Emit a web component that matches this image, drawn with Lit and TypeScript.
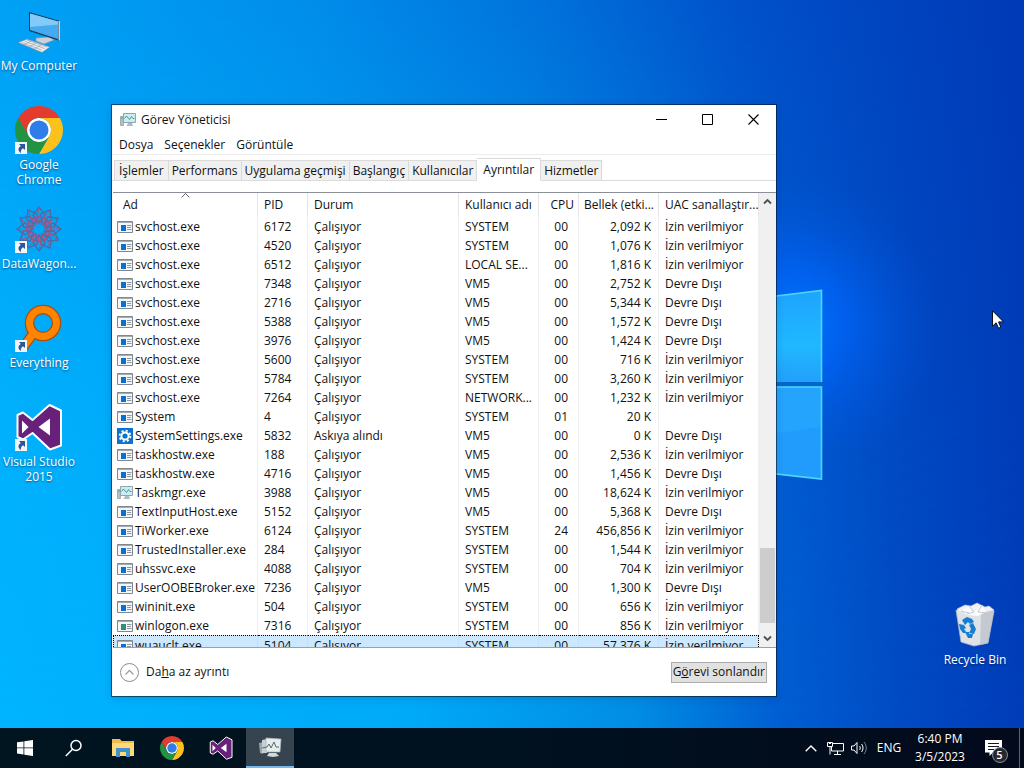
import { LitElement, html, css, svg, TemplateResult } from "lit";
import { customElement, state } from "lit/decorators.js";
import { classMap } from "lit/directives/class-map.js";

type IconKind = "exe" | "gear" | "taskmgr" | "logon";
type Row = [string, string, string, string, string, string, string, IconKind?];

const RUN = "Çalışıyor";
const DENY = "İzin verilmiyor";
const OFF = "Devre Dışı";

const ROWS: Row[] = [
  ["svchost.exe", "6172", RUN, "SYSTEM", "00", "2,092 K", DENY],
  ["svchost.exe", "4520", RUN, "SYSTEM", "00", "1,076 K", DENY],
  ["svchost.exe", "6512", RUN, "LOCAL SE...", "00", "1,816 K", DENY],
  ["svchost.exe", "7348", RUN, "VM5", "00", "2,752 K", OFF],
  ["svchost.exe", "2716", RUN, "VM5", "00", "5,344 K", OFF],
  ["svchost.exe", "5388", RUN, "VM5", "00", "1,572 K", OFF],
  ["svchost.exe", "3976", RUN, "VM5", "00", "1,424 K", OFF],
  ["svchost.exe", "5600", RUN, "SYSTEM", "00", "716 K", DENY],
  ["svchost.exe", "5784", RUN, "SYSTEM", "00", "3,260 K", DENY],
  ["svchost.exe", "7264", RUN, "NETWORK...", "00", "1,232 K", DENY],
  ["System", "4", RUN, "SYSTEM", "01", "20 K", ""],
  ["SystemSettings.exe", "5832", "Askıya alındı", "VM5", "00", "0 K", OFF, "gear"],
  ["taskhostw.exe", "188", RUN, "VM5", "00", "2,536 K", DENY],
  ["taskhostw.exe", "4716", RUN, "VM5", "00", "1,456 K", OFF],
  ["Taskmgr.exe", "3988", RUN, "VM5", "00", "18,624 K", DENY, "taskmgr"],
  ["TextInputHost.exe", "5152", RUN, "VM5", "00", "5,368 K", OFF],
  ["TiWorker.exe", "6124", RUN, "SYSTEM", "24", "456,856 K", DENY],
  ["TrustedInstaller.exe", "284", RUN, "SYSTEM", "00", "1,544 K", DENY],
  ["uhssvc.exe", "4088", RUN, "SYSTEM", "00", "704 K", DENY],
  ["UserOOBEBroker.exe", "7236", RUN, "VM5", "00", "1,300 K", OFF],
  ["wininit.exe", "504", RUN, "SYSTEM", "00", "656 K", DENY],
  ["winlogon.exe", "7316", RUN, "SYSTEM", "00", "856 K", DENY, "logon"],
  ["wuauclt.exe", "5104", RUN, "SYSTEM", "00", "57,376 K", DENY],
];

const COLUMNS: { label: string; width: number; align?: string }[] = [
  { label: "Ad", width: 145 },
  { label: "PID", width: 50 },
  { label: "Durum", width: 151 },
  { label: "Kullanıcı adı", width: 80 },
  { label: "CPU", width: 40, align: "num cpu" },
  { label: "Bellek (etki...", width: 80, align: "num" },
  { label: "UAC sanallaştır...", width: 100 },
];

const TABS = ["İşlemler", "Performans", "Uygulama geçmişi", "Başlangıç", "Kullanıcılar", "Ayrıntılar", "Hizmetler"];

const chromeIcon = (size: number) => html`<svg width=${size} height=${size} viewBox="0 0 48 48" aria-hidden="true">
  <circle cx="24" cy="24" r="12" fill="#fff" />
  <path fill="#e33b2e" d="M24 12h20.78a24 24 0 0 0-41.56 0L13.6 30A12 12 0 0 1 24 12z" />
  <path fill="#fcc21b" d="M34.39 30 24 48a24 24 0 0 0 20.78-36H24a12 12 0 0 1 10.39 18z" />
  <path fill="#229342" d="M13.61 30 3.22 12A24 24 0 0 0 24 48l10.39-18a12 12 0 0 1-20.78 0z" />
  <circle cx="24" cy="24" r="9.5" fill="#2f7de9" />
</svg>`;

const vsIcon = (size: number) => html`<svg width=${size} height=${size} viewBox="0 0 48 48" aria-hidden="true">
  <path fill="#68217a" stroke="#fff" stroke-width="2" stroke-linejoin="round" fill-rule="evenodd"
    d="M2.5 12 8 9.5 17.5 17 34.5 2 46 7.5v35L35 46.500 17.500 30 8 36.500 2.500 34z" />
  <path fill="#fff" d="M7 17.500 13.500 24 7 30.500zM23.500 24 35 15.500v17z" />
</svg>`;

const everythingIcon = html`<svg width="48" height="48" viewBox="0 0 48 48" aria-hidden="true">
  <path d="M17 31 7 45" stroke="#a84d10" stroke-width="10" />
  <circle cx="28" cy="19" r="13.500" fill="none" stroke="#a84d10" stroke-width="9.500" />
  <path d="M18.500 29 7 45" stroke="#ff8400" stroke-width="7.500" />
  <circle cx="28" cy="19" r="13.500" fill="none" stroke="#ff8400" stroke-width="7" />
</svg>`;

const dataWagonIcon = html`<svg width="48" height="48" viewBox="0 0 48 48" fill="none" aria-hidden="true">
  ${Array.from({ length: 12 }, (_, i) => svg`<g transform="rotate(${i * 30} 24 24)">
    <path d="M24 18 18 10 24 2 30 10z" stroke="#55669f" stroke-width="1.300" />
    <path d="M24 19 29 12 34 6" stroke="#8d5f92" stroke-width="1.100" />
    <circle cx="24" cy="12" r="1.700" fill="#a85280" />
    <circle cx="20" cy="16" r="1.300" fill="#b4527a" />
  </g>`)}
</svg>`;

const computerIcon = html`<svg width="48" height="48" viewBox="0 0 48 48" aria-hidden="true">
  <path d="M21 31l13-1 5 3-10 4-8-3z" fill="#c9d2da" stroke="#8796a5" stroke-width=".6" />
  <path d="M14 5l31 9v20l-31-10z" fill="#1b3d5f" />
  <path d="M43.500 14l1.500 0v20l-1.500-1z" fill="#c6d3dd" />
  <path d="M15 6.500l28 8v17.500l-28-9z" fill="#46aaf0" />
  <path d="M15 6.500l28 8v3L15 20z" fill="#82caf8" />
  <path d="M3 35.500l9-3.500 23 8-8 5.500z" fill="#e8edf1" stroke="#76889a" stroke-width=".7" />
  <path d="M6.500 35.500l20 7.500M9.500 34.200l20 7.300M12 33l20 7M9 38l7-4M14 40l7-4M19 42l7-4" stroke="#98a5b0" stroke-width=".7" />
</svg>`;

const binIcon = html`<svg width="48" height="48" viewBox="0 0 48 48" aria-hidden="true">
  <path d="M6 8l8-4 6 1 6-3 8 4 4-1 5 4-5 8H10z" fill="#eff1f4" stroke="#c7ccd4" stroke-width=".6" />
  <path d="M5 9l5 32 13 4 14-3 6-32-7 2-10 1-11-1z" fill="#dfe2e7" />
  <path d="M30 12l13-3-6 33-8 2z" fill="#c5cad2" />
  <path d="M10 10l8-5 5 6 8-7 4 7-8 4-11-1z" fill="#fbfbfc" />
  <path d="M18 5l5 6-7 2M31 4l-4 7 8 1M10 10l8 2" stroke="#b7bcc4" stroke-width=".8" fill="none" />
  <path d="M5 9l5 32 13 4 14-3 6-32" fill="none" stroke="#afb7c3" stroke-width=".8" />
  <g fill="#167dd2">
    <path d="M11 19l5-3 5 2 2 3-4 2-2-2-3 3z" />
    <path d="M22 22l3 6-2 5-5-1 2-4-2-4z" />
    <path d="M8 23l5 1 2 3-2 1 3 4-4 0-3-4z" />
    <path d="M14 31l4 0 0 2 4 0-1 4-4 0z" />
  </g>
</svg>`;

const monitorIcon = (size: number) => html`<svg width=${size} height=${size} viewBox="0 0 16 16" aria-hidden="true">
  <path d="M.5 4.500h3v9h-3z" fill="#b5c0be" stroke="#909a98" stroke-width=".7" />
  <path d="M1.200 6h1.600" stroke="#39a868" />
  <path d="M3.500 1.500h12v9h-12z" fill="#cdecf1" stroke="#93a5ac" />
  <path d="M4.500 6.500l2-2.500 3 3.500 2-3 1.500 2h1.500" fill="none" stroke="#3b8f9a" stroke-width=".9" />
  <path d="M8 11h4l1 3H6.500z" fill="#b1bac0" />
</svg>`;

const taskbarMonitor = html`<svg width="24" height="24" viewBox="0 0 24 24" aria-hidden="true">
  <path d="M1 8l4-1v12l-3-1z" fill="#98a5a9" /><path d="M4 5l5-1v14l-5 0z" fill="#c7cfd1" />
  <path d="M8 3l15 1-1 13-14 0z" fill="#e7eced" stroke="#aab5b9" stroke-width=".7" />
  <path d="M4 13l5-1 2-3 2 4 3-6 2 5h3" fill="none" stroke="#516a72" stroke-width="1" />
  <path d="M11 18h7l3 3-6 1-6-1z" fill="#d4dadb" />
</svg>`;

const rowIcon = (kind: IconKind = "exe"): TemplateResult => {
  if (kind === "taskmgr") return monitorIcon(16);
  if (kind === "gear")
    return html`<svg width="16" height="16" viewBox="0 0 16 16" aria-hidden="true">
      <path d="M0 0h16v16H0z" fill="#0d72cc" />
      <circle cx="8" cy="8" r="3.600" fill="none" stroke="#fff" stroke-width="2" />
      <circle cx="8" cy="8" r="5.400" fill="none" stroke="#fff" stroke-width="1.800" stroke-dasharray="2.120 2.120" />
    </svg>`;
  const block = kind === "logon" ? "#2f8f7c" : "#0a6fd0";
  return html`<svg width="16" height="16" viewBox="0 0 16 16" aria-hidden="true">
    <path d="M.5 2.500h15v11H.5z" fill="#f4f7f8" stroke="#7f888e" />
    <path d="M1 3.500h14" stroke="#a4adb2" />
    <path d="M4 6h5v6H4z" fill=${block} />
    <path d="M10 6.500h4.500M10 8.500h4M10 10.500h4.500" stroke="#8d979d" />
  </svg>`;
};

@customElement("desktop-shortcut")
class DesktopShortcut extends LitElement {
  static properties = { label: {}, icon: { attribute: false }, link: { type: Boolean } };
  declare label: string;
  declare icon: TemplateResult;
  declare link: boolean;

  static styles = css`
    :host { display: block; }
    .item {
      display: flex; flex-direction: column; align-items: center; gap: 3px;
      width: 100%; padding: 0; border: 0; background: none; color: #fff;
      font: 12px/15px "Open Sans", "Noto Sans", sans-serif;
      text-shadow: 0 1px 2px rgba(0, 20, 60, 0.6);
    }
    .art { position: relative; display: block; width: 48px; height: 48px; }
    .arrow { position: absolute; left: 0; bottom: 0; }
    .label { white-space: pre; }
  `;

  render() {
    return html`<button class="item">
      <span class="art">${this.icon}${this.link
        ? html`<svg class="arrow" width="12" height="12" viewBox="0 0 12 12" aria-hidden="true">
            <path d="M0 0h12v12H0z" fill="#f2f5f8" />
            <path d="M4 2h6v6L8 6.200C6 7.500 5.500 9 6 11 2.500 9 3 5.500 5.800 4z" fill="#2b579a" />
          </svg>`
        : ""}</span>
      <span class="label">${this.label}</span>
    </button>`;
  }
}

@customElement("task-manager")
class TaskManager extends LitElement {
  @state() private selectedTab = 5;
  private readonly scroll = { before: 338, thumb: 75, after: 7 };

  static styles = css`
    :host {
      display: flex; flex-direction: column; box-sizing: border-box;
      background: #fff; background-clip: padding-box;
      border: 1px solid rgba(0, 20, 40, 0.6);
      box-shadow: 0 2px 8px rgba(0, 20, 60, 0.15);
      color: #111; font: 12px/16px "Open Sans", "Noto Sans", sans-serif;
    }
    button { font: inherit; color: inherit; background: none; border: 0; padding: 0; }
    .titlebar { display: flex; align-items: center; height: 30px; padding-left: 8px; }
    .titlebar svg { display: block; }
    .title { flex: 1; margin: 0 0 0 5px; font: inherit; }
    .winbtn { width: 46px; height: 28px; align-self: flex-start; display: grid; place-items: center; }
    .menu { display: flex; gap: 11px; height: 19px; padding: 0 7px; border-bottom: 1px solid #ececec; }
    .tabs { display: flex; align-items: flex-end; height: 25px; padding-left: 2px; border-bottom: 1px solid #dcdcdc; }
    .tab {
      height: 20px; padding: 0 3px; background: #f0f0f0;
      border: 1px solid #dadada; border-bottom: 0; border-left-width: 0;
    }
    .tab:first-child { padding: 0 4px; border-left-width: 1px; }
    .tab.on { height: 23px; padding: 0 6px; margin-bottom: -1px; background: #fff; border-bottom: 1px solid #fff; }
    .view {
      flex: 1; min-height: 0; display: flex; margin: 11px 0 0 1px;
      border-top: 1px solid #8a8f98; border-bottom: 1px solid #9a9fa8; overflow: hidden;
    }
    .list { flex: 1; min-width: 0; overflow: hidden; }
    table { width: 100%; border-collapse: separate; border-spacing: 0; table-layout: fixed; }
    th, td {
      padding: 0 0 0 6px; box-sizing: border-box; font-weight: 400; text-align: left;
      border-right: 1px solid #f0f0f0; white-space: nowrap; overflow: hidden;
    }
    th { height: 24px; border-right-color: #e4e4e4; }
    td { height: 19px; line-height: 19px; }
    th:first-child { padding-left: 10px; }
    td:first-child { padding-left: 4px; }
    .num { text-align: right; padding: 0 7px 0 0; }
    th.num { padding-right: 4px; }
    td.cpu { padding-right: 10px; }
    .name { display: flex; align-items: center; gap: 2px; height: 19px; }
    .name svg { flex: none; }
    .selected td { background: #cce8ff; border-top: 1px dotted #000; border-right-color: #c2e0f8; line-height: 18px; }
    .selected td:first-child { border-left: 1px dotted #000; padding-left: 3px; }
    .selected td:last-child { border-right: 1px dotted #000; }
    .sorthead { position: relative; }
    .sort { position: absolute; left: 68px; top: 0; }
    .scroll { width: 17px; display: flex; flex-direction: column; background: #f0f0f0; }
    .scroll button { height: 17px; display: grid; place-items: center; }
    .thumb { margin: 0 1px; background: #cdcdcd; }
    .footer { display: flex; align-items: center; justify-content: space-between; height: 48px; padding: 0 9px 0 8px; }
    .less { display: flex; align-items: center; gap: 7px; }
    .end { height: 21px; padding: 0 1px; background: #e1e1e1; border: 1px solid #adadad; line-height: 18px; }
  `;

  render() {
    return html`
      <header class="titlebar">
        ${monitorIcon(16)}
        <h1 class="title">Görev Yöneticisi</h1>
        <button class="winbtn" aria-label="Simge durumuna küçült"><svg width="11" height="11"><path d="M0 5.500h11" stroke="#000" /></svg></button>
        <button class="winbtn" aria-label="Ekranı kapla"><svg width="11" height="11"><path d="M.5 .5h10v10H.5z" fill="none" stroke="#000" /></svg></button>
        <button class="winbtn" aria-label="Kapat"><svg width="11" height="11"><path d="M.5 .5l10 10M10.500 .5l-10 10" stroke="#000" stroke-width="1.100" /></svg></button>
      </header>
      <nav class="menu"><button>Dosya</button><button>Seçenekler</button><button>Görüntüle</button></nav>
      <div class="tabs" role="tablist">
        ${TABS.map((t, i) => html`<button role="tab" aria-selected=${i === this.selectedTab}
          class=${classMap({ tab: true, on: i === this.selectedTab })}
          @click=${() => (this.selectedTab = i)}>${t}</button>`)}
      </div>
      <div class="view">
        <div class="list">
          <table>
            <colgroup>${COLUMNS.map((c) => html`<col style="width:${c.width}px" />`)}</colgroup>
            <thead><tr>${COLUMNS.map((c, i) => html`<th scope="col" class="${c.align ?? ""} ${i === 0 ? "sorthead" : ""}">${i === 0
              ? html`<svg class="sort" width="9" height="5" aria-hidden="true"><path d="M.5 4.500l4-4 4 4" fill="none" stroke="#666" /></svg>`
              : ""}${c.label}</th>`)}</tr></thead>
            <tbody>
              ${ROWS.map((r, n) => html`<tr class=${n === ROWS.length - 1 ? "selected" : ""}>
                <td><div class="name">${rowIcon(r[7])}<span>${r[0]}</span></div></td>
                <td>${r[1]}</td><td>${r[2]}</td><td>${r[3]}</td>
                <td class="num cpu">${r[4]}</td><td class="num">${r[5]}</td><td>${r[6]}</td>
              </tr>`)}
            </tbody>
          </table>
        </div>
        <div class="scroll">
          <button aria-label="Yukarı"><svg width="9" height="7"><path d="M1 5.500l3.500-3.500 3.500 3.500" fill="none" stroke="#505050" stroke-width="1.800" /></svg></button>
          <div style="flex:${this.scroll.before} 0 0"></div>
          <div class="thumb" style="flex:${this.scroll.thumb} 0 0"></div>
          <div style="flex:${this.scroll.after} 0 0"></div>
          <button aria-label="Aşağı"><svg width="9" height="7"><path d="M1 1.500l3.500 3.500 3.500-3.500" fill="none" stroke="#505050" stroke-width="1.800" /></svg></button>
        </div>
      </div>
      <footer class="footer">
        <button class="less">
          <svg width="19" height="19" aria-hidden="true"><circle cx="9.500" cy="9.500" r="9" fill="none" stroke="#8c8c8c" /><path d="M5.500 11.500l4-4 4 4" fill="none" stroke="#a0a0a0" stroke-width="1.300" /></svg>
          <span>Da<u>h</u>a az ayrıntı</span>
        </button>
        <button class="end">G<u>ö</u>revi sonlandır</button>
      </footer>
    `;
  }
}

@customElement("task-bar")
class TaskBar extends LitElement {
  static styles = css`
    :host {
      display: flex; align-items: stretch; justify-content: space-between; height: 40px;
      background: linear-gradient(90deg, #00151f, #00111f 50%, #020a1c);
      color: #fff; font: 12px/18px "Open Sans", "Noto Sans", sans-serif;
    }
    button { font: inherit; color: inherit; background: none; border: 0; padding: 0; display: grid; place-items: center; }
    svg { display: block; }
    .apps { display: flex; gap: 1px; padding-left: 1px; }
    .app { width: 48px; }
    .app.active { background: #35444e; border-bottom: 2px solid #76b9ed; }
    .tray { display: flex; align-items: stretch; }
    .small { width: 24px; }
    .lang { width: 36px; }
    .clock { width: 66px; text-align: center; }
    .note { width: 46px; padding-right: 6px; }
    .bell { position: relative; display: block; }
    .count {
      position: absolute; left: 7px; top: 7px; width: 16px; height: 16px; box-sizing: border-box;
      border: 1px solid #8c9196; border-radius: 50%; background: #24292f; font-size: 11px; line-height: 14px; font-weight: 600; text-align: center;
    }
    .peek { width: 4px; border-left: 1px solid #5a626c; }
  `;

  render() {
    return html`
      <div class="apps">
        <button class="app" aria-label="Start"><svg width="16" height="16"><path d="M0 2.300l6.500-.9v6.100H0zM7.300 1.300 16 0v7.500H7.300zM0 8.300h6.500v6.200L0 13.600zM7.300 8.300H16V16l-8.700-1.300z" fill="#fff" /></svg></button>
        <button class="app" aria-label="Search"><svg width="18" height="18"><circle cx="11" cy="6.500" r="5" fill="none" stroke="#fff" stroke-width="1.500" /><path d="M7.500 10.200.8 17" stroke="#fff" stroke-width="1.500" /></svg></button>
        <button class="app" aria-label="File Explorer"><svg width="22" height="20" viewBox="0 0 22 20">
          <path d="M0 1h8l1.500 2H22v14H0z" fill="#f0bb4c" /><path d="M0 5h22v13H0z" fill="#ffd978" />
          <path d="M4 10h14v9h-4v-5H8v5H4z" fill="#3e93cc" /></svg></button>
        <button class="app" aria-label="Google Chrome">${chromeIcon(24)}</button>
        <button class="app" aria-label="Visual Studio">${vsIcon(24)}</button>
        <button class="app active" aria-label="Task Manager">${taskbarMonitor}</button>
      </div>
      <div class="tray">
        <button class="small" aria-label="Hidden icons"><svg width="12" height="7"><path d="M.7 6.300 6 1l5.300 5.300" fill="none" stroke="#fff" stroke-width="1.400" /></svg></button>
        <button class="small" aria-label="Network"><svg width="17" height="14" fill="none" stroke="#fff"><path d="M6 2.500h10.500v7.500H4.500V6M10.500 10v3M7 13.500h7" /><path d="M.5 1.500h5v4h-5zM2 2.500h2M3 6v7.500" /></svg></button>
        <button class="small" aria-label="Volume"><svg width="17" height="14" fill="none" stroke="#fff"><path d="M.5 5h2.500l3-3.500v11L3 9H.5z" /><path d="M8.500 5c1 1 1 3 0 4M10.500 3c2 2.500 2 5.500 0 8" /><path d="M13 1c3 3.500 3 8.500 0 12" stroke="#7d858e" /></svg></button>
        <button class="lang">ENG</button>
        <button class="clock"><span>6:40 PM<br />3/5/2023</span></button>
        <button class="note" aria-label="Notifications"><span class="bell">
          <svg width="17" height="17"><path d="M0 0h17v12.500H8L4.500 16v-3.500H0z" fill="#fff" /><path d="M3 3.500h11M3 6.500h11M3 9.500h6" stroke="#10192a" /></svg>
          <span class="count">5</span></span></button>
        <div class="peek"></div>
      </div>
    `;
  }
}

@customElement("app-root")
class AppRoot extends LitElement {
  static styles = css`
    :host { display: flex; flex-direction: column; height: 100vh; overflow: hidden; }
    .desktop {
      position: relative; flex: 1; min-height: 0; display: flex; justify-content: space-between;
      box-sizing: border-box; padding: 7px 10px 0 0; overflow: hidden; background: #0058cc;
    }
    .wallpaper { position: absolute; inset: 0; width: 100%; height: 100%; }
    .shortcuts { position: relative; display: grid; grid-auto-rows: 99px; width: 78px; }
    .bin { grid-row: 7; }
    .window { position: absolute; left: 111px; top: 104px; width: 666px; height: 593px; }
    .pointer { position: absolute; left: 992px; top: 310px; }
  `;

  render() {
    return html`
      <main class="desktop">
        <svg class="wallpaper" viewBox="0 0 1024 728" preserveAspectRatio="none" aria-hidden="true">
          <defs>
            <linearGradient id="base" x1="0" y1="0" x2="1" y2="0">
              <stop offset="0" stop-color="#00a2f6" /><stop offset=".3" stop-color="#008eeb" />
              <stop offset=".52" stop-color="#0074dc" /><stop offset=".72" stop-color="#0052cb" />
              <stop offset=".88" stop-color="#0043bf" /><stop offset="1" stop-color="#003ab6" />
            </linearGradient>
            <linearGradient id="low" x1="0" y1="0" x2="1" y2="0">
              <stop offset="0" stop-color="#00b4ff" /><stop offset=".4" stop-color="#00aaf8" />
              <stop offset=".62" stop-color="#008ee4" /><stop offset=".76" stop-color="#005fd2" />
              <stop offset=".88" stop-color="#004bc4" /><stop offset="1" stop-color="#003cb8" />
            </linearGradient>
            <linearGradient id="fade" x1="0" y1="0" x2="0" y2="1">
              <stop offset="0" stop-color="#000" /><stop offset=".6" stop-color="#ccc" /><stop offset="1" stop-color="#fff" />
            </linearGradient>
            <mask id="m"><rect width="1024" height="728" fill="url(#fade)" /></mask>
            <radialGradient id="glow" gradientUnits="userSpaceOnUse" cx="790" cy="325" r="150">
              <stop offset="0" stop-color="#0078ff" /><stop offset=".35" stop-color="#0066fa" stop-opacity=".75" />
              <stop offset="1" stop-color="#0054d8" stop-opacity="0" />
            </radialGradient>
            <linearGradient id="pane" x1="0" y1="0" x2="0" y2="1">
              <stop offset="0" stop-color="#1ea4ff" /><stop offset=".6" stop-color="#20b8ff" /><stop offset="1" stop-color="#22a0fc" />
            </linearGradient>
          </defs>
          <rect width="1024" height="728" fill="url(#base)" />
          <rect width="1024" height="728" fill="url(#low)" mask="url(#m)" />
          <rect width="1024" height="728" fill="url(#glow)" />
          <path d="M740 382h83v5h-83z" fill="#0068cc" />
          <path d="M740 300.500 821 290.500v91.500h-81z" fill="url(#pane)" />
          <path d="M740 387h81v92l-81-9z" fill="#229cfc" />
          <path d="M740 387h81v40l-81 11z" fill="#26a8ff" opacity=".7" />
          <path d="M740 300.500 821.500 290.500V382M740 470l81.500 9V387h-82" fill="none" stroke="#4cd6fb" stroke-width="1.600" />
        </svg>
        <div class="shortcuts">
          <desktop-shortcut .label=${"My Computer"} .icon=${computerIcon}></desktop-shortcut>
          <desktop-shortcut .label=${"Google\nChrome"} .icon=${chromeIcon(48)} .link=${true}></desktop-shortcut>
          <desktop-shortcut .label=${"DataWagon..."} .icon=${dataWagonIcon} .link=${true}></desktop-shortcut>
          <desktop-shortcut .label=${"Everything"} .icon=${everythingIcon} .link=${true}></desktop-shortcut>
          <desktop-shortcut .label=${"Visual Studio\n2015"} .icon=${vsIcon(48)} .link=${true}></desktop-shortcut>
        </div>
        <div class="shortcuts">
          <desktop-shortcut class="bin" .label=${"Recycle Bin"} .icon=${binIcon}></desktop-shortcut>
        </div>
        <task-manager class="window"></task-manager>
        <svg class="pointer" width="12" height="19" viewBox="0 0 12 19" aria-hidden="true">
          <path d="M.5 .8v15.400l3.600-3.400 2.400 5.400 2.300-1-2.300-5.300h5z" fill="#fff" stroke="#000" stroke-width=".9" />
        </svg>
      </main>
      <task-bar></task-bar>
    `;
  }
}
